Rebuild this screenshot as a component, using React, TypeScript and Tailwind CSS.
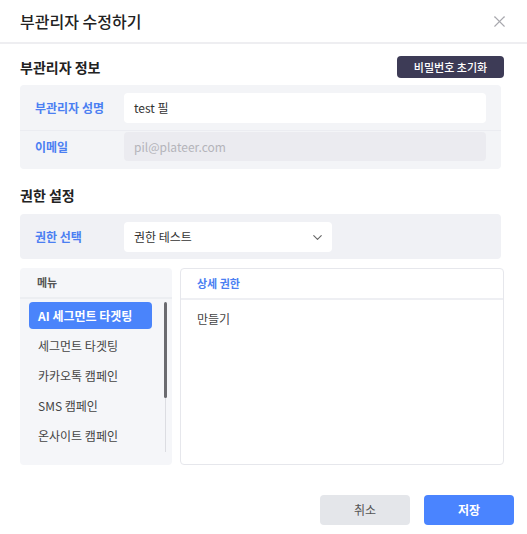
import { ChevronDown, X } from "lucide-react";

const menus = ["AI 세그먼트 타겟팅", "세그먼트 타겟팅", "카카오톡 캠페인", "SMS 캠페인", "온사이트 캠페인"];

export default function App() {
  return (
    <div
      className="w-[527px] h-[534px] bg-white text-[#333] overflow-hidden"
      style={{ fontFamily: '"Noto Sans CJK KR", "Noto Sans", sans-serif' }}
    >
      {/* header */}
      <div className="h-[44px] px-5 flex items-center justify-between border-b-2 border-[#eeeef1]">
        <h1 className="text-[16px] font-medium text-[#222] leading-none">부관리자 수정하기</h1>
        <X className="w-[19px] h-[19px] mr-[-2px] text-[#a8a8ae]" strokeWidth={1.4} />
      </div>

      <div className="px-5">
        {/* info */}
        <div className="mt-[12px] h-[22px] flex items-center justify-between">
          <h2 className="text-[14px] font-bold text-[#222]">부관리자 정보</h2>
          <button className="h-[22px] w-[107px] mr-[3px] rounded bg-[#3d3b56] text-white text-[11px] font-medium">
            비밀번호 초기화
          </button>
        </div>
        <div className="mt-[7px] w-[481px] rounded bg-[#f3f4f7] flex flex-col text-[12px]">
          <div className="flex items-center pl-[15px] pr-[15px] pt-[8px] pb-[7px] border-b border-[#ebecf1]">
            <span className="w-[89px] font-bold text-[#4b7ff2]">부관리자 성명</span>
            <div className="flex-1 h-[30px] rounded bg-white flex items-center px-[10px] text-[#333]">test 필</div>
          </div>
          <div className="flex items-center pl-[15px] pr-[15px] pt-[1px] pb-[8px]">
            <span className="w-[89px] font-bold text-[#4b7ff2]">이메일</span>
            <div className="flex-1 h-[29px] rounded bg-[#ebebf0] flex items-center px-[10px] text-[#b4b4ba]">
              pil@plateer.com
            </div>
          </div>
        </div>

        {/* permission */}
        <h2 className="mt-[16px] h-[20px] flex items-center text-[14px] font-bold text-[#222]">권한 설정</h2>
        <div className="mt-[9px] w-[481px] rounded bg-[#f0f1f5] flex items-center pl-[15px] pt-[8px] pb-[7px] text-[12px]">
          <span className="w-[89px] font-bold text-[#4b7ff2]">권한 선택</span>
          <div className="w-[208px] h-[30px] rounded bg-white flex items-center justify-between pl-[10px] pr-[7px]">
            <span>권한 테스트</span>
            <ChevronDown className="w-[15px] h-[15px] text-[#666]" strokeWidth={1.8} />
          </div>
        </div>

        <div className="mt-[9px] flex gap-[8px] h-[197px]">
          <div className="w-[152px] rounded bg-[#f5f6f9] flex flex-col">
            <div className="h-[31px] flex items-center pl-[17px] border-b-2 border-[#eceef2] text-[11px] font-bold text-[#555]">
              메뉴
            </div>
            <div className="flex pt-[3px]">
              <div className="flex-1 pl-[9px] flex flex-col">
                <div className="h-[27px] w-[123px] rounded bg-[#4a84fb] text-white font-bold text-[12px] flex items-center pl-[9px]">
                  {menus[0]}
                </div>
                <div className="mt-[2px] flex flex-col">
                  {menus.slice(1).map((m) => (
                    <div key={m} className="h-[30px] flex items-center pl-[9px] text-[12px] text-[#444]">
                      {m}
                    </div>
                  ))}
                </div>
              </div>
              <div className="w-[3px] mr-[5px] h-[150px] relative flex justify-center">
                <div className="w-px h-full bg-[#dcdde2]" />
                <div className="absolute top-0 left-0 w-[3px] h-[96px] rounded bg-[#6b6b70]" />
              </div>
            </div>
          </div>
          <div className="w-[324px] rounded border border-[#e6e7ec] bg-white flex flex-col">
            <div className="h-[31px] flex items-center pl-[16px] border-b-2 border-[#eeeff3] text-[11px] font-bold text-[#4b7ff2]">
              상세 권한
            </div>
            <div className="pl-[16px] pt-[10px] text-[12px] text-[#444]">만들기</div>
          </div>
        </div>

        <div className="mt-[30px] flex justify-end gap-[14px] mr-[-7px]">
          <button className="w-[90px] h-[30px] rounded bg-[#e4e6ea] text-[12px] text-[#555]">취소</button>
          <button className="w-[90px] h-[30px] rounded bg-[#4a84ff] text-[12px] font-bold text-white">저장</button>
        </div>
      </div>
    </div>
  );
}
